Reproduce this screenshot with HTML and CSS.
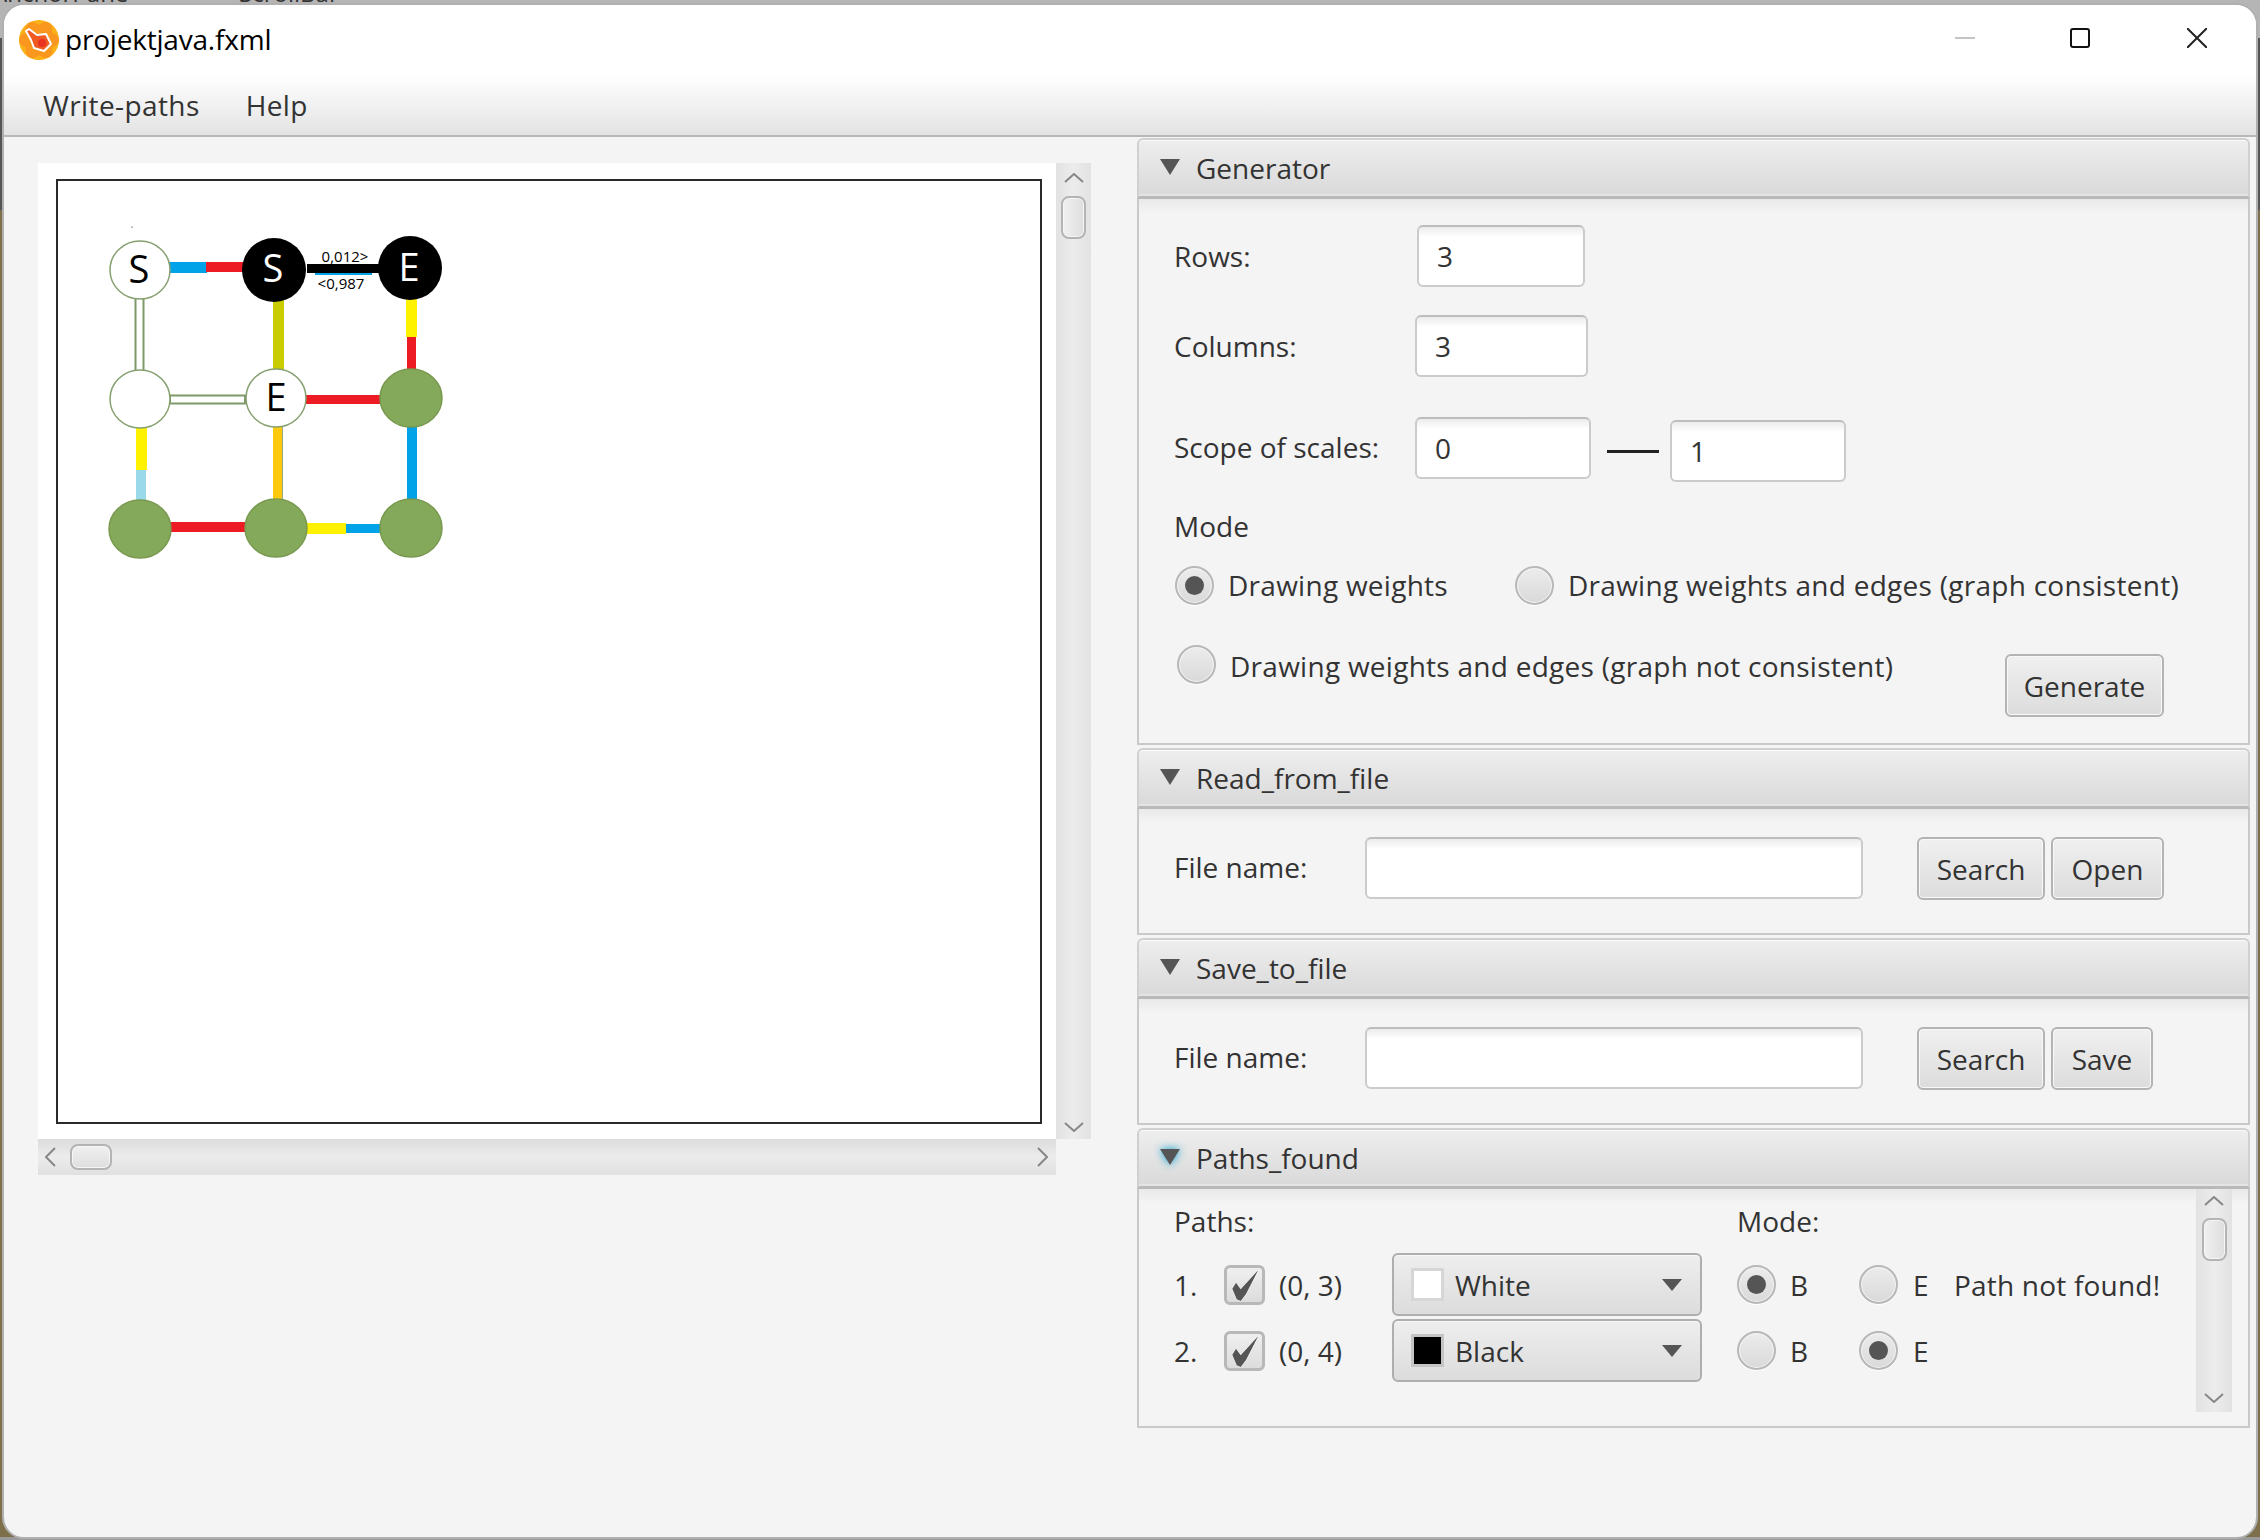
FILE: index.html
```html
<!DOCTYPE html>
<html lang="en">
<head>
    <meta charset="UTF-8">
    <title>projektjava.fxml</title>
    <link rel="stylesheet" href="styles.css">
</head>
<body>
    <div class="crumbs"><span>AnchorPane</span><span class="crumb-sep">&gt;</span><span>ScrollBar</span></div>

    <div class="window">
        <div class="titlebar">
            <svg class="app-icon" viewBox="0 0 40 40">
                <circle cx="20" cy="20" r="20" fill="#fbb117"/>
                <ellipse cx="20" cy="20" rx="20" ry="10" fill="#f9971e"/>
                <ellipse cx="20" cy="20" rx="20" ry="10" fill="#f9971e" transform="rotate(60 20 20)"/>
                <ellipse cx="20" cy="20" rx="20" ry="10" fill="#f9971e" transform="rotate(120 20 20)"/>
                <path d="M7 11 L10 9 L18 15 L27 14 L32 24 L25 31 L15 28 L12 20 Z" fill="#ef5a23" stroke="#fff" stroke-width="2" stroke-linejoin="round"/>
                <circle cx="23" cy="23" r="4" fill="#e8321f"/>
            </svg>
            <span class="title">projektjava.fxml</span>
            <span class="win-min"></span>
            <span class="win-max"></span>
            <svg class="win-close" viewBox="0 0 20 20"><path d="M0 0 L20 20 M20 0 L0 20" stroke="#222" stroke-width="2"/></svg>
        </div>

        <div class="menubar">
            <span class="menu-item">Write-paths</span>
            <span class="menu-item">Help</span>
        </div>

        <div class="content">
            <div class="scrollpane">
                <div class="viewport">
                    <div class="canvas">
                        <svg class="graph" viewBox="18 11 440 400">
                            <circle cx="92" cy="57" r="0.6" fill="#000"/>
                            <!-- edges, top row -->
                            <rect x="129" y="92" width="38" height="11" fill="#00a2e8"/>
                            <rect x="166" y="92" width="39" height="10" fill="#ed1c24"/>
                            <rect x="275" y="103" width="57" height="2" fill="#00a2e8"/>
                            <rect x="267" y="94" width="72" height="9" fill="#000"/>
                            <!-- edges, down from the top row -->
                            <rect x="95.5" y="128" width="8" height="74" class="edge-open"/>
                            <rect x="233" y="130" width="11" height="72" fill="#c8cc00"/>
                            <rect x="366" y="127" width="11" height="40" fill="#fff200"/>
                            <rect x="367" y="167" width="9" height="34" fill="#ed1c24"/>
                            <!-- edges, middle row -->
                            <rect x="130" y="225.5" width="75" height="8" class="edge-open"/>
                            <rect x="265" y="225" width="76" height="9" fill="#ed1c24"/>
                            <!-- edges, down from the middle row -->
                            <rect x="96" y="253" width="11" height="47" fill="#fff200"/>
                            <rect x="96" y="300" width="10" height="31" fill="#99d9ea"/>
                            <rect x="233" y="253" width="9" height="76" fill="#ffc90e"/>
                            <rect x="242" y="253" width="1" height="76" fill="#9aa77c"/>
                            <rect x="367" y="256" width="10" height="76" fill="#00a2e8"/>
                            <!-- edges, bottom row -->
                            <rect x="129" y="352" width="76" height="10" fill="#ed1c24"/>
                            <rect x="265" y="353" width="41" height="11" fill="#fff200"/>
                            <rect x="306" y="354" width="36" height="9" fill="#00a2e8"/>
                            <!-- nodes -->
                            <ellipse class="node" cx="100" cy="100" rx="30" ry="29"/>
                            <ellipse class="node" cx="100" cy="229" rx="30" ry="29"/>
                            <ellipse class="node" cx="236" cy="228" rx="30" ry="29"/>
                            <ellipse class="node-dark" cx="234" cy="100" rx="32" ry="32"/>
                            <ellipse class="node-dark" cx="370" cy="98" rx="32" ry="32"/>
                            <ellipse class="node-green" cx="371" cy="228" rx="31" ry="29"/>
                            <ellipse class="node-green" cx="100" cy="359" rx="31" ry="29"/>
                            <ellipse class="node-green" cx="236" cy="358" rx="31" ry="29"/>
                            <ellipse class="node-green" cx="371" cy="358" rx="31" ry="29"/>
                            <text class="node-text" x="99" y="113">S</text>
                            <text class="node-text light" x="233" y="112">S</text>
                            <text class="node-text light" x="369" y="111">E</text>
                            <text class="node-text" x="236" y="241">E</text>
                            <text class="weight" x="305" y="92">0,012&gt;</text>
                            <text class="weight" x="301" y="119">&lt;0,987</text>
                        </svg>
                    </div>
                </div>
                <div class="vscroll main-v">
                    <svg class="chev-v" viewBox="0 0 20 10"><path d="M1 9 L10 1 L19 9"/></svg>
                    <span class="thumb-v"></span>
                    <svg class="chev-v down" viewBox="0 0 20 10"><path d="M1 1 L10 9 L19 1"/></svg>
                </div>
                <div class="hscroll">
                    <svg class="chev-h" viewBox="0 0 11 20"><path d="M10 1 L1 10 L10 19"/></svg>
                    <span class="thumb-h"></span>
                    <svg class="chev-h right" viewBox="0 0 11 20"><path d="M1 1 L10 10 L1 19"/></svg>
                </div>
            </div>

            <div class="accordion">
                <section class="pane">
                    <div class="pane-head"><span class="arrow"></span>Generator</div>
                    <div class="pane-body generator">
                        <div class="row row-rows"><label>Rows:</label><input class="field" value="3"></div>
                        <div class="row row-cols"><label>Columns:</label><input class="field" value="3"></div>
                        <div class="row row-scope">
                            <label>Scope of scales:</label>
                            <input class="field" value="0">
                            <span class="dash"></span>
                            <input class="field second" value="1">
                        </div>
                        <div class="mode-label">Mode</div>
                        <div class="row radio-row">
                            <span class="radio on"></span><span class="radio-text first">Drawing weights</span>
                            <span class="radio"></span><span class="radio-text">Drawing weights and edges (graph consistent)</span>
                        </div>
                        <div class="row radio-row-last">
                            <span class="radio"></span><span class="radio-text">Drawing weights and edges (graph not consistent)</span>
                            <button class="btn generate">Generate</button>
                        </div>
                    </div>
                </section>

                <section class="pane">
                    <div class="pane-head"><span class="arrow"></span>Read_from_file</div>
                    <div class="pane-body file-body">
                        <label>File name:</label>
                        <input class="field file-field">
                        <button class="btn btn-search">Search</button>
                        <button class="btn btn-open">Open</button>
                    </div>
                </section>

                <section class="pane">
                    <div class="pane-head"><span class="arrow"></span>Save_to_file</div>
                    <div class="pane-body file-body">
                        <label>File name:</label>
                        <input class="field file-field">
                        <button class="btn btn-search">Search</button>
                        <button class="btn btn-save">Save</button>
                    </div>
                </section>

                <section class="pane">
                    <div class="pane-head"><span class="arrow focused"></span>Paths_found</div>
                    <div class="pane-body paths-body">
                        <div class="paths-grid">
                            <div class="paths-title">Paths:</div>
                            <div class="modes-title">Mode:</div>

                            <span>1.</span>
                            <span class="check"><svg viewBox="0 0 41 40"><path d="M8.3 23.7 L12 17.7 L16.7 24.3 L34.3 5 L22 29 L16.7 36 L12.7 34.3 Z"/></svg></span>
                            <span>(0, 3)</span>
                            <div class="combo"><span class="swatch white"></span>White<span class="combo-arrow"></span></div>
                            <span class="radio on"></span><span>B</span>
                            <span class="radio"></span><span>E</span>
                            <span class="not-found">Path not found!</span>

                            <span>2.</span>
                            <span class="check"><svg viewBox="0 0 41 40"><path d="M8.3 23.7 L12 17.7 L16.7 24.3 L34.3 5 L22 29 L16.7 36 L12.7 34.3 Z"/></svg></span>
                            <span>(0, 4)</span>
                            <div class="combo"><span class="swatch black"></span>Black<span class="combo-arrow"></span></div>
                            <span class="radio"></span><span>B</span>
                            <span class="radio on"></span><span>E</span>
                            <span></span>
                        </div>
                        <div class="vscroll paths-v">
                            <svg class="chev-v" viewBox="0 0 20 10"><path d="M1 9 L10 1 L19 9"/></svg>
                            <span class="thumb-v"></span>
                            <svg class="chev-v down" viewBox="0 0 20 10"><path d="M1 1 L10 9 L19 1"/></svg>
                        </div>
                    </div>
                </section>
            </div>
        </div>
    </div>
</body>
</html>
```

FILE: styles.css
```css
/* Page and what is left of the desktop behind the window */
* {
    box-sizing: border-box;
}

body {
    margin: 0;
    height: 1540px;
    overflow: hidden;
    font-family: "Open Sans", "Noto Sans", sans-serif;
    font-size: 28px;
    color: #333;
    background: linear-gradient(to bottom, #b5b5b5 0, #b5b5b5 38px, #555 38px, #555 210px, #7d6f4a 210px, #7d6f4a 1537px, #999 1537px);
    padding: 3px 2px 1px;
}

.crumbs {
    position: absolute;
    top: -22px;
    left: -8px;
    display: flex;
    gap: 25px;
    font-size: 24px;
    line-height: 30px;
    color: #333;
}

.crumb-sep {
    margin-right: 47px;
}

/* Window frame */
.window {
    position: relative;
    height: 1536px;
    display: flex;
    flex-direction: column;
    background-color: #f4f4f4;
    border: 2px solid #b0b0b0;
    border-radius: 22px;
    overflow: hidden;
}

.titlebar {
    height: 70px;
    display: flex;
    align-items: center;
    padding: 0 49px 0 15px;
    background-color: #fff;
    color: #000;
}

.app-icon {
    width: 40px;
    height: 40px;
    margin-right: 6px;
}

.title {
    flex: 1;
    margin-top: -2px;
    letter-spacing: -0.2px;
}

.win-min {
    width: 20px;
    height: 2px;
    margin-top: -4px;
    background-color: #c4c4c4;
}

.win-max {
    width: 20px;
    height: 20px;
    margin: -4px 0 0 95px;
    border: 2px solid #111;
    border-radius: 3px;
}

.win-close {
    width: 20px;
    height: 20px;
    margin: -4px 0 0 97px;
}

.menubar {
    height: 62px;
    display: flex;
    gap: 46px;
    align-items: center;
    padding: 0 0 0 39px;
    letter-spacing: 0.4px;
    background: linear-gradient(to bottom, #fff, #e3e3e3);
    border-bottom: 2px solid #b8b8b8;
}

/* Main area */
.content {
    flex: 1;
    display: flex;
    align-items: flex-start;
    padding: 1px 0 0 34px;
}

.scrollpane {
    width: 1053px;
    margin-top: 25px;
    display: grid;
    grid-template-columns: 1018px 35px;
    grid-template-rows: 976px 36px;
}

.viewport {
    padding: 16px 14px 15px 18px;
    background-color: #fff;
}

.canvas {
    height: 100%;
    border: 2px solid #2a2a2a;
    background-color: #fff;
}

.graph {
    display: block;
    width: 440px;
    height: 400px;
}

.node {
    fill: #fff;
    stroke: #86a070;
    stroke-width: 1.5;
}

.node-dark {
    fill: #000;
}

.node-green {
    fill: #85a95b;
    stroke: #79994f;
    stroke-width: 1.5;
}

.edge-open {
    fill: #fff;
    stroke: #7f9a6a;
    stroke-width: 2;
}

.node-text {
    font-size: 38px;
    text-anchor: middle;
    fill: #000;
}

.node-text.light {
    fill: #fff;
}

.weight {
    font-size: 15px;
    text-anchor: middle;
    fill: #000;
}

/* Scrollbars */
.vscroll {
    display: flex;
    flex-direction: column;
    align-items: center;
    background: linear-gradient(to right, #e2e2e2, #ececec 50%, #e2e2e2);
}

.hscroll {
    display: flex;
    align-items: center;
    padding: 0 7px;
    height: 36px;
    background: linear-gradient(to bottom, #dcdcdc, #ececec 50%, #e0e0e0);
}

.chev-v {
    width: 20px;
    height: 10px;
    margin-top: 10px;
}

.chev-v.down {
    margin: auto 0 7px;
}

.chev-h {
    width: 11px;
    height: 20px;
}

.chev-h.right {
    margin-left: auto;
    margin-right: 1px;
}

.chev-v path,
.chev-h path {
    fill: none;
    stroke: #888;
    stroke-width: 2;
}

.thumb-v {
    width: 25px;
    height: 43px;
    margin-top: 13px;
    border: 2px solid #b4b4b4;
    border-radius: 8px;
    background: linear-gradient(to right, #f0f0f0, #dedede);
    box-shadow: inset 0 0 0 1px #f6f6f6;
}

.thumb-h {
    width: 42px;
    height: 26px;
    margin-left: 14px;
    border: 2px solid #b4b4b4;
    border-radius: 8px;
    background: linear-gradient(to bottom, #f0f0f0, #dedede);
    box-shadow: inset 0 0 0 1px #f6f6f6;
}

/* Titled panes */
.accordion {
    width: 1113px;
    margin-left: 46px;
    display: flex;
    flex-direction: column;
    gap: 3px;
}

.pane-head {
    height: 61px;
    display: flex;
    align-items: center;
    padding-left: 21px;
    background: linear-gradient(to bottom, #eeeeee, #d9d9d9);
    border: 2px solid #d0d0d0;
    border-bottom: 3px solid #b9b9b9;
    border-radius: 6px 6px 0 0;
    box-shadow: inset 0 1px 0 #fafafa, inset 0 -2px 0 #e4e4e4;
}

.arrow {
    width: 0;
    height: 0;
    margin: -3px 16px 0 0;
    border-left: 10px solid transparent;
    border-right: 10px solid transparent;
    border-top: 16px solid #555;
}

.arrow.focused {
    filter: drop-shadow(0 0 4px #039ed3);
}

.pane-body {
    background: linear-gradient(to bottom, #e9e9e9, #f4f4f4 14px);
    border: 2px solid #c9c9c9;
    border-top: none;
}

.generator {
    height: 546px;
    padding: 26px 0 0 35px;
}

.row {
    display: flex;
    align-items: center;
}

.row-rows label {
    width: 243px;
}

.row-rows .field {
    width: 168px;
}

.row-cols {
    margin-top: 28px;
}

.row-cols label,
.row-scope label {
    width: 241px;
}

.row-cols .field {
    width: 173px;
}

.row-scope {
    margin-top: 40px;
    align-items: flex-start;
}

.row-scope label {
    line-height: 60px;
}

.row-scope .field {
    width: 176px;
}

.row-scope .second {
    margin-top: 3px;
}

.dash {
    width: 52px;
    height: 3px;
    margin: 33px 11px 0 16px;
    background-color: #222;
}

.mode-label {
    margin-top: 24px;
    line-height: 40px;
}

.radio-row {
    margin: 19px 0 0 1px;
    height: 40px;
}

.radio-row .first {
    width: 287px;
}

.radio-row-last {
    margin: 40px 0 0 3px;
    align-items: flex-start;
}

.radio-text {
    letter-spacing: 0.27px;
}

.radio-row-last .radio-text {
    margin-top: 2px;
}

/* Form controls */
.field {
    height: 62px;
    padding: 0 18px;
    font: inherit;
    color: #333;
    border: 2px solid #cbcbcb;
    border-top-color: #bdbdbd;
    border-radius: 6px;
    background: linear-gradient(to bottom, #ececec, #fff 10px);
    outline: none;
}

.btn {
    height: 63px;
    padding: 0;
    font: inherit;
    color: #333;
    border: 2px solid #b4b4b4;
    border-radius: 6px;
    background: linear-gradient(to bottom, #f0f0f0, #dcdcdc);
    box-shadow: inset 0 0 0 1px #f8f8f8;
}

.generate {
    width: 159px;
    margin: 9px 84px 0 auto;
}

.radio {
    flex: none;
    position: relative;
    display: block;
    width: 39px;
    height: 39px;
    margin-right: 14px;
    border: 2px solid #b8b8b8;
    border-radius: 50%;
    background: linear-gradient(to bottom, #ececec, #d9d9d9);
    box-shadow: 0 1px 0 #fff, inset 0 0 0 1px #f4f4f4;
}

.radio.on::after {
    content: "";
    position: absolute;
    left: 8px;
    top: 8px;
    width: 19px;
    height: 19px;
    border-radius: 50%;
    background-color: #555;
}

.file-body {
    height: 126px;
    display: flex;
    align-items: flex-start;
    padding: 28px 0 0 35px;
}

.file-body label {
    width: 191px;
    line-height: 60px;
}

.file-field {
    width: 498px;
}

.btn-search {
    width: 128px;
    margin-left: 54px;
}

.btn-open {
    width: 113px;
    margin-left: 6px;
}

.btn-save {
    width: 102px;
    margin-left: 6px;
}

/* Paths list */
.paths-body {
    height: 239px;
    display: flex;
    align-items: flex-start;
    padding-left: 35px;
}

.paths-grid {
    width: 986px;
    margin-top: 13px;
    display: grid;
    grid-template-columns: 50px 55px 113px 345px 53px 69px 54px 41px 206px;
    grid-template-rows: 48px 63px 63px;
    row-gap: 3px;
    align-items: center;
}

.paths-title {
    grid-column: 1 / 5;
    align-self: start;
}

.modes-title {
    grid-column: 5 / -1;
    align-self: start;
}

.paths-grid .radio {
    margin-right: 0;
}

.not-found {
    white-space: nowrap;
    letter-spacing: 0.2px;
}

.check {
    display: block;
    width: 41px;
    height: 40px;
    border: 3px solid #b8b8b8;
    border-radius: 6px;
    background: linear-gradient(to bottom, #efefef, #dcdcdc);
}

.check svg {
    display: block;
    width: 41px;
    height: 40px;
    margin: -3px;
}

.check path {
    fill: #555;
    stroke: #fff;
    stroke-width: 1;
    paint-order: stroke;
}

.combo {
    width: 310px;
    height: 63px;
    display: flex;
    align-items: center;
    padding-left: 17px;
    border: 2px solid #aeaeae;
    border-radius: 6px;
    background: linear-gradient(to bottom, #eeeeee, #dcdcdc);
    box-shadow: inset 0 1px 0 #f8f8f8;
}

.swatch {
    width: 33px;
    height: 33px;
    margin-right: 11px;
    border: 3px solid #d6d6d6;
}

.swatch.white {
    background-color: #fff;
}

.swatch.black {
    background-color: #000;
    border-color: #c4c4c4;
}

.combo-arrow {
    width: 0;
    height: 0;
    margin: 0 18px 0 auto;
    border-left: 10px solid transparent;
    border-right: 10px solid transparent;
    border-top: 12px solid #555;
}

.paths-v {
    flex: none;
    width: 36px;
    height: 223px;
    margin-left: 36px;
}

.paths-v .chev-v {
    margin-top: 7px;
}

.paths-v .chev-v.down {
    margin: auto 0 9px;
}

.paths-v .thumb-v {
    margin-top: 12px;
}
```
